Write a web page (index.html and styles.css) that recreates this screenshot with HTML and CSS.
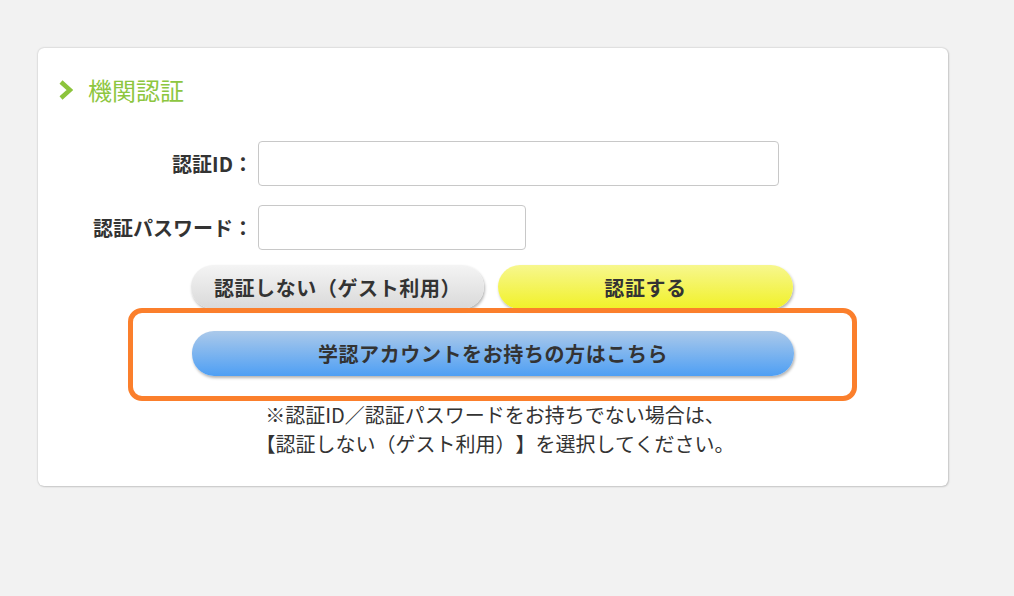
FILE: index.html
```html
<!DOCTYPE html>
<html lang="ja">
<head>
<meta charset="utf-8">
<link rel="stylesheet" href="styles.css">
</head>
<body>
<div class="card">
  <h2 class="title">
    <svg class="chev" width="14" height="20" viewBox="0 0 14 20"><path d="M2 2 L11 10 L2 18" fill="none" stroke="#8cc43c" stroke-width="4.5" stroke-linejoin="miter"/></svg>
    <span>機関認証</span>
  </h2>
  <div class="form">
    <div class="row">
      <label class="lbl">認証ID：</label>
      <input class="inp inp-long" type="text">
    </div>
    <div class="row">
      <label class="lbl">認証パスワード：</label>
      <input class="inp inp-short" type="password">
    </div>
  </div>
  <div class="btns">
    <button class="btn btn-gray">認証しない（ゲスト利用）</button>
    <button class="btn btn-yellow">認証する</button>
  </div>
  <div class="highlight">
    <button class="btn btn-blue">学認アカウントをお持ちの方はこちら</button>
  </div>
  <p class="note">※認証ID／認証パスワードをお持ちでない場合は、<br>【認証しない（ゲスト利用）】を選択してください。</p>
</div>
</body>
</html>
```
FILE: styles.css
```css
* { box-sizing: border-box; }
html, body { margin: 0; padding: 0; }
body {
  background: #f2f2f2;
  font-family: "Noto Sans CJK JP", "Noto Sans", sans-serif;
  color: #333;
  width: 1014px;
  height: 596px;
  overflow: hidden;
  padding-top: 48px;
  padding-left: 38px;
  text-spacing-trim: space-all;
  font-feature-settings: normal;
}
.card {
  width: 910px;
  height: 438px;
  background: #fff;
  border-radius: 6px;
  box-shadow: 0 0 2px rgba(0,0,0,0.25), 1px 1px 2px rgba(0,0,0,0.12);
  padding-top: 28px;
}
.title {
  margin: 0;
  display: flex;
  align-items: center;
  height: 28px;
  padding-left: 21px;
  font-size: 24px;
  line-height: 28px;
  font-weight: normal;
  color: #8dc640;
}
.chev { margin-right: 15px; }
.form {
  margin-top: 37px;
  display: flex;
  flex-direction: column;
  gap: 19px;
}
.row {
  display: flex;
  align-items: center;
}
.lbl {
  width: 218px;
  text-align: right;
  font-size: 20px;
  font-weight: bold;
  color: #333;
  padding-right: 3px;
}
.inp {
  height: 45px;
  border: 1px solid #c8c8c8;
  border-radius: 4px;
  background: #fff;
  margin-left: 2px;
}
.inp-long { width: 521px; }
.inp-short { width: 268px; }
.btns {
  margin-top: 15px;
  display: flex;
  justify-content: center;
  gap: 14px;
  padding-right: 2px;
}
.btn {
  height: 44px;
  border: none;
  border-radius: 22px;
  font-family: "Noto Sans CJK JP", "Noto Sans", sans-serif;
  font-size: 20px;
  font-weight: bold;
  color: #333;
  letter-spacing: 0.6px;
  box-shadow: 1px 2px 3px rgba(0,0,0,0.3);
  padding: 0;
  text-spacing-trim: space-all;
}
.btn-gray {
  width: 293px;
  background: linear-gradient(#f4f4f4, #d9d9d9);
}
.btn-yellow {
  width: 295px;
  background: linear-gradient(#f7f78e, #f1f128);
}
.highlight {
  margin: -1px auto 0;
  width: 729px;
  height: 93px;
  border: 5px solid #fb7f2c;
  border-radius: 14px;
  display: flex;
  justify-content: center;
  padding-top: 18px;
  position: relative;
  left: -1px;
}
.btn-blue {
  width: 602px;
  height: 45px;
  background: linear-gradient(#abc9ea, #4e9ff4);
  position: relative;
  left: 1px;
}
.note {
  margin: -1px 0 0;
  text-align: center;
  font-size: 20px;
  line-height: 29px;
  color: #333;
  padding-left: 4px;
}
```
